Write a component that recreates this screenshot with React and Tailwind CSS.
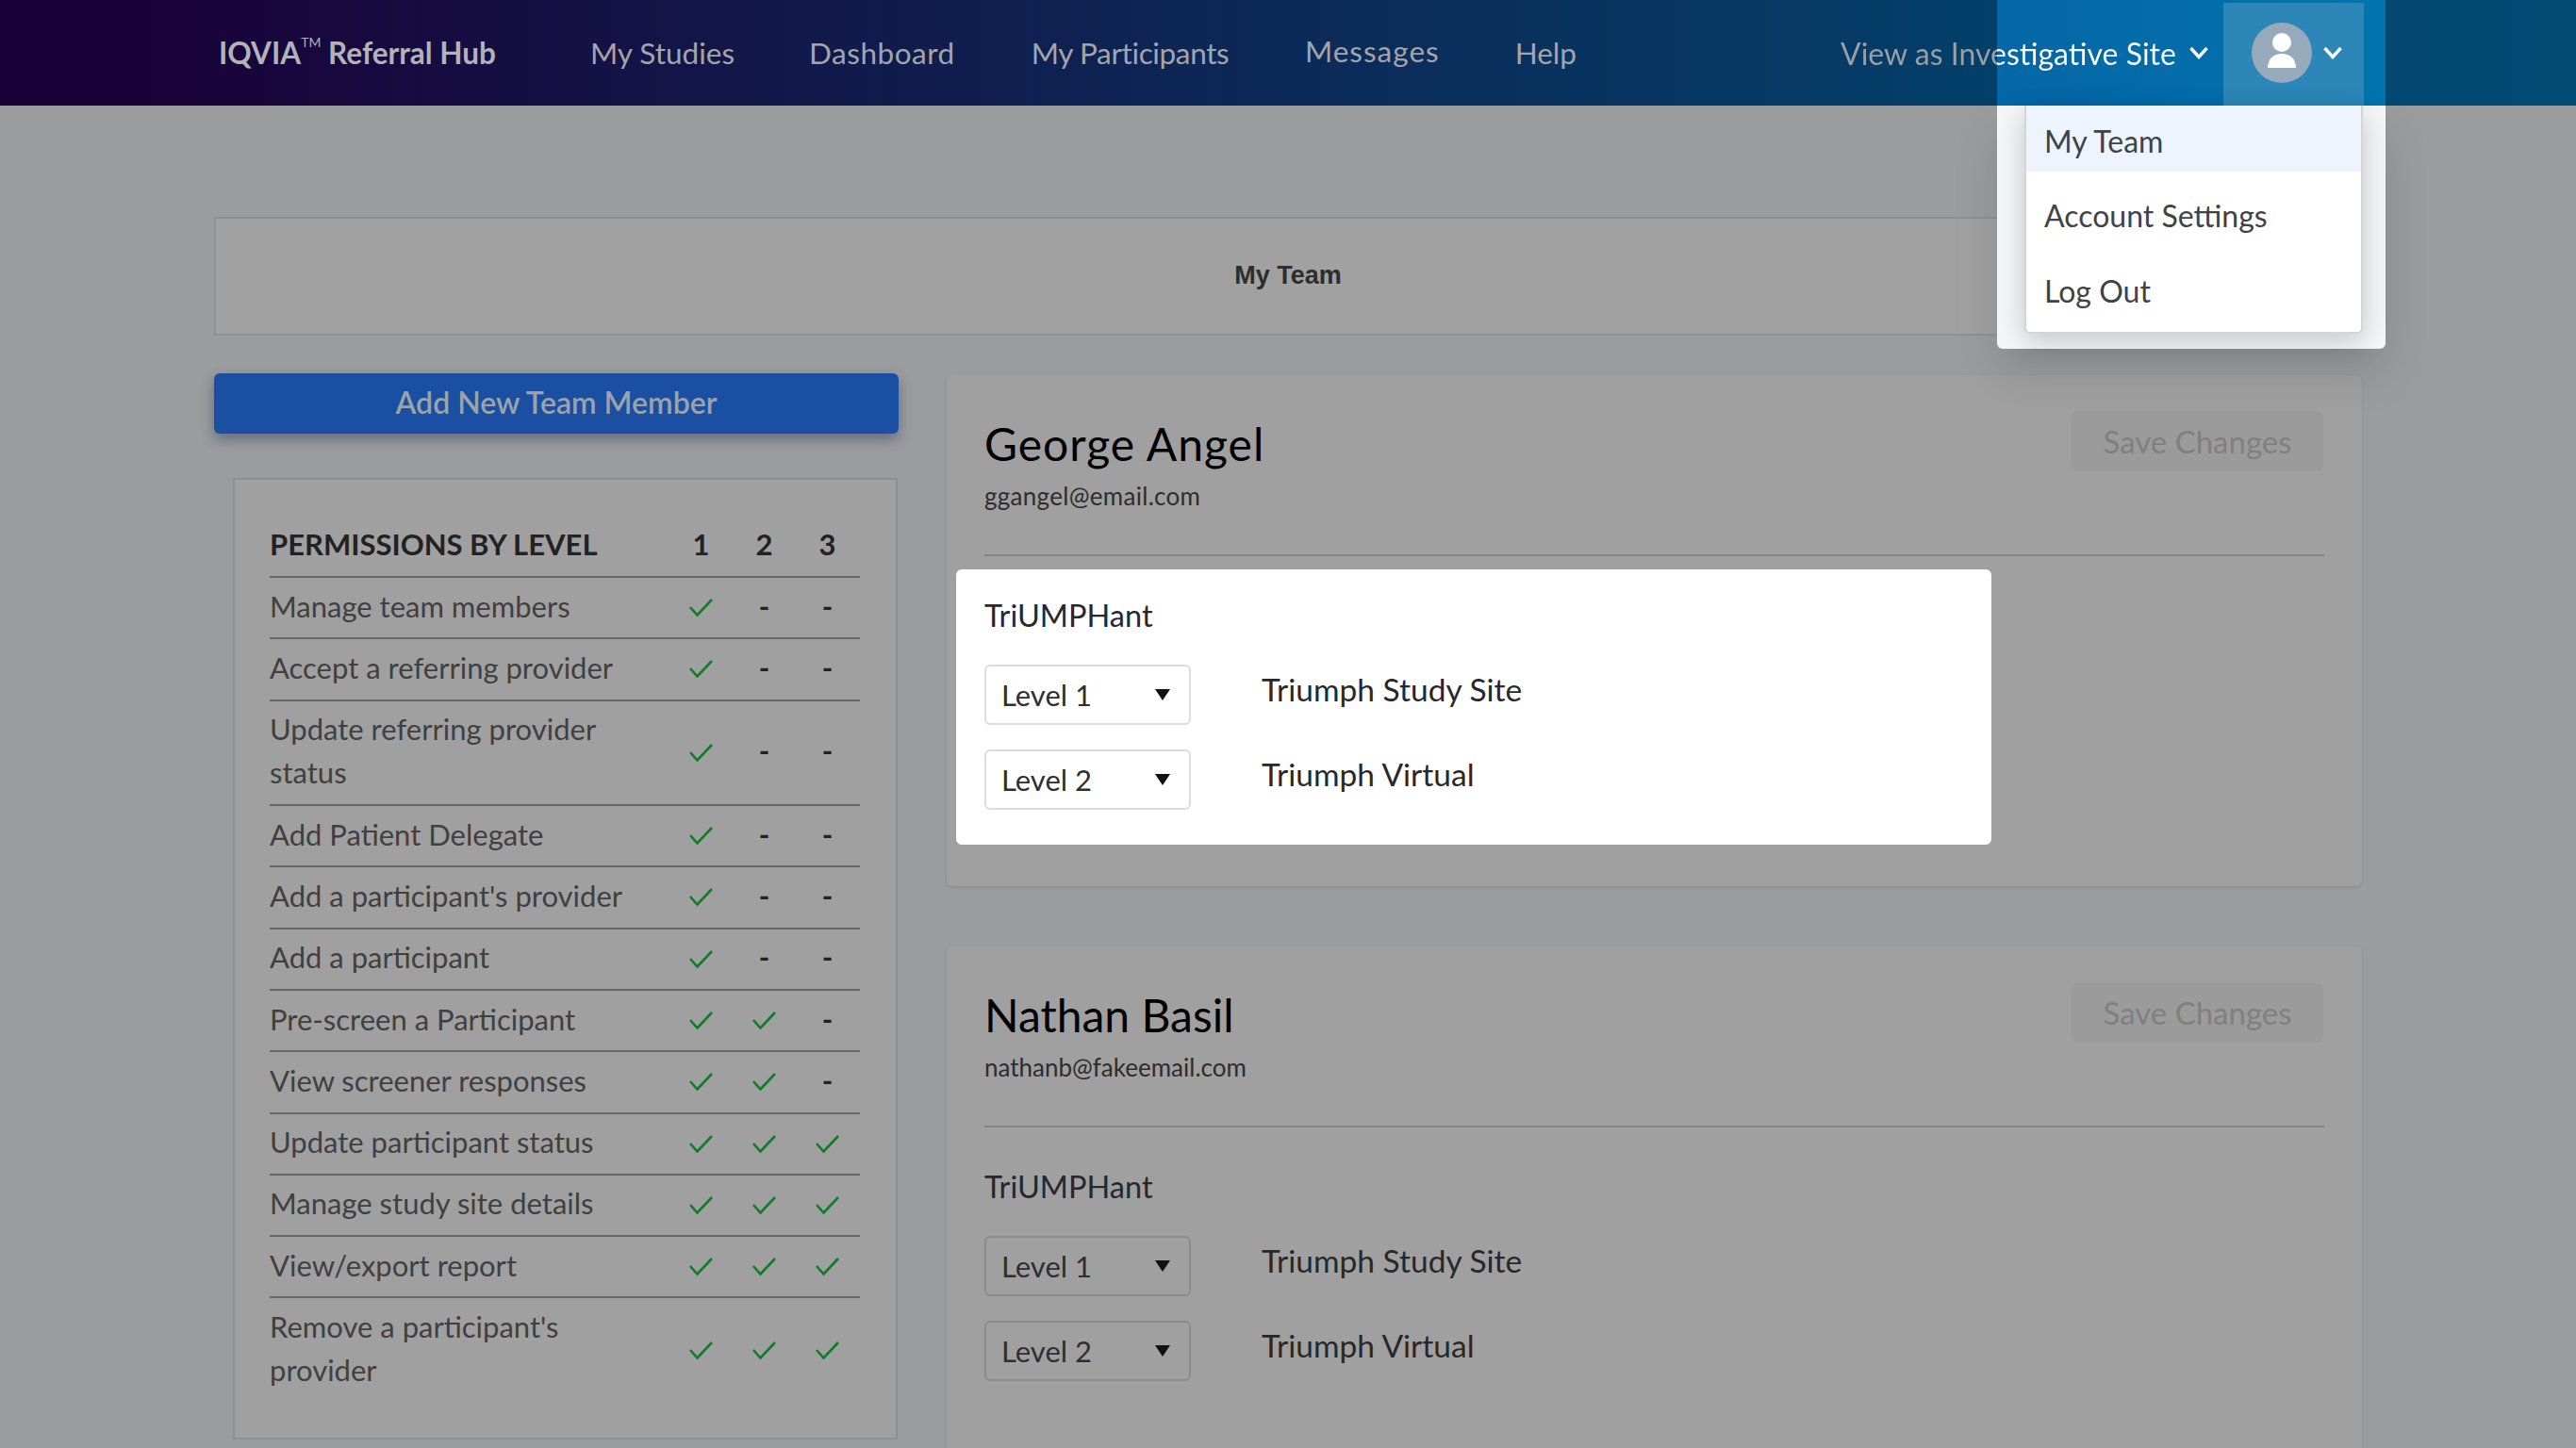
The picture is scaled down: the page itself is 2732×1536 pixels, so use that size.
import React from "react";

const font = "font-['Lato','Liberation_Sans',sans-serif]";

const permissions = [
  { label: ["Manage team members"], levels: [1, 0, 0] },
  { label: ["Accept a referring provider"], levels: [1, 0, 0] },
  { label: ["Update referring provider", "status"], levels: [1, 0, 0] },
  { label: ["Add Patient Delegate"], levels: [1, 0, 0] },
  { label: ["Add a participant's provider"], levels: [1, 0, 0] },
  { label: ["Add a participant"], levels: [1, 0, 0] },
  { label: ["Pre-screen a Participant"], levels: [1, 1, 0] },
  { label: ["View screener responses"], levels: [1, 1, 0] },
  { label: ["Update participant status"], levels: [1, 1, 1] },
  { label: ["Manage study site details"], levels: [1, 1, 1] },
  { label: ["View/export report"], levels: [1, 1, 1] },
  { label: ["Remove a participant's", "provider"], levels: [1, 1, 1] },
];

const Chevron = ({ className }) => (
  <svg viewBox="0 0 20 14" className={className} fill="none" stroke="currentColor" strokeWidth="3.4">
    <path d="M1.5 2 L10 11.5 L18.5 2" />
  </svg>
);

const Tick = () => (
  <svg viewBox="0 0 25 19" className="w-[25px] h-[19px]" fill="none" stroke="#0f7d27" strokeWidth="2.6">
    <path d="M1 9 L8.5 17.5 L24 1" />
  </svg>
);

const LevelSelect = ({ level, light }) => (
  <div className={`w-[219px] h-[64px] shrink-0 flex items-center justify-between pl-[16px] pr-[20px] border-2 rounded-md text-[31px] text-[#2c2f33] ${light ? "border-[#dcdcdc]" : "border-[#8b8b8b]"}`}>
    <span>{level}</span>
    <svg viewBox="0 0 16 12" className="w-[16px] h-[12px]"><path d="M0 0 H16 L8 12 Z" fill="#111" /></svg>
  </div>
);

const SiteRow = ({ level, site, light }) => (
  <div className="flex items-start">
    <LevelSelect level={level} light={light} />
    <span className="ml-[75px] pt-[1px] text-[33.5px] leading-[50px] text-[#26282b]">{site}</span>
  </div>
);

const MemberCard = ({ name, email, spotlight, nameClass, emailClass }) => (
  <div className="w-[1501px] h-[542px] mb-[64px] px-[40px] pt-[39px] bg-[#a0a0a0] rounded-md shadow-[0_1px_3px_rgba(0,0,0,0.12)]">
    <div className="flex justify-between items-start h-[153px] pr-[1px] border-b-2 border-[#858585]">
      <div>
        <h2 className={`text-[48px] leading-[68px] text-black ${nameClass || ""}`}>{name}</h2>
        <p className={`text-[26px] leading-[38px] mt-[2px] text-[#2d2d2d] ${emailClass || ""}`}>{email}</p>
      </div>
      <button className="w-[267px] h-[63px] rounded-md bg-[#9b9b9b] text-[33px] text-[#808080]">Save Changes</button>
    </div>
    <div className={spotlight ? "-mx-[30px] mt-[14px] w-[1098px] h-[292px] px-[30px] pt-[24px] bg-white rounded-md" : "mt-[14px] pt-[24px]"}>
      <h3 className="text-[32.5px] leading-[50px] text-[#26282b]">TriUMPHant</h3>
      <div className="mt-[27px] flex flex-col gap-[26px]">
        <SiteRow level="Level 1" site="Triumph Study Site" light={spotlight} />
        <SiteRow level="Level 2" site="Triumph Virtual" light={spotlight} />
      </div>
    </div>
  </div>
);

export default function App() {
  return (
    <div className={`${font} h-[1536px] overflow-hidden bg-[#9b9c9e]`}>
      <header className="h-[112px] flex items-center pl-[232px] pr-[202px] bg-[linear-gradient(90deg,#1a0038_4%,#0b2b59_52%,#03406a_78%,#024c74_100%)] text-[#a3a5ab]">
        <div className="pt-[2px] text-[31.5px] font-bold text-[#b1b3b8]">
          IQVIA<sup className="text-[14px] font-normal align-super">TM</sup> Referral Hub
        </div>
        <nav className="flex pt-[2px] text-[31.5px]">
          <a className="ml-[100px]">My Studies</a>
          <a className="ml-[79px] tracking-[0.5px]">Dashboard</a>
          <a className="ml-[81px] tracking-[-0.35px]">My Participants</a>
          <a className="ml-[80.5px] -mt-[2px] tracking-[1px]">Messages</a>
          <a className="ml-[80px]">Help</a>
        </nav>
        <div className="relative ml-auto w-[412px] h-full flex items-center bg-[linear-gradient(90deg,#0566a5,#0174ae)] text-white">
          <span className="-ml-[166px] pt-[2px] w-[355px] shrink-0 text-[32px] whitespace-nowrap bg-clip-text text-transparent bg-[linear-gradient(90deg,#9aa0a8_166px,#ffffff_166px)]">
            View as Investigative Site
          </span>
          <Chevron className="ml-[15px] w-[20px] h-[14px] shrink-0" />
          <div className="ml-[16px] mt-[3px] w-[149px] h-[109px] shrink-0 flex items-center bg-[#2c86b8] pl-[30px] pb-[3px]">
            <div className="w-[64px] h-[64px] rounded-full bg-[#97aabc] flex items-center justify-center">
              <svg viewBox="0 0 64 64" className="w-[64px] h-[64px]" fill="#fff">
                <circle cx="32" cy="21" r="10" />
                <path d="M17 48 C17 38 24 33 32 33 C40 33 47 38 47 48 Z" />
              </svg>
            </div>
            <Chevron className="ml-[12px] w-[20px] h-[14px]" />
          </div>
          {/* spotlighted account menu */}
          <div className="absolute top-[112px] left-0 w-[412px] h-[258px] bg-[#f5f6f8] rounded-b-md shadow-[0_26px_50px_rgba(0,0,0,0.12)] z-10">
            <div className="ml-[29px] w-[359px] h-[242px] bg-white rounded-b-md border-x-2 border-b-2 border-[#d3d5d8] shadow-[0_8px_30px_rgba(0,0,0,0.2)] text-[32px] text-[#3f4347]">
              <div className="h-[70px] pl-[19px] pt-[15px] leading-[46px] bg-[#edf4fd] mb-[8px]">My Team</div>
              <div className="h-[80px] pl-[19px] leading-[78px]">Account Settings</div>
              <div className="h-[80px] pl-[19px] leading-[78px]">Log Out</div>
            </div>
          </div>
        </div>
      </header>

      <main className="pl-[227px] pt-[118px]">
        <div className="w-[2278px] h-[126px] pb-[2px] flex items-center justify-center bg-[#a1a1a1] border-2 border-[#8f9092] font-['Liberation_Sans',sans-serif] font-bold text-[27px] text-[#2d2d2d]">
          My Team
        </div>

        <div className="flex mt-[40px]">
          <div className="w-[726px]">
            <button className="w-full h-[64px] pb-[2px] rounded-md bg-[#1b4fa2] text-[32px] font-semibold text-[#9aa3ad] shadow-[0_6px_14px_rgba(30,50,100,0.45)]">
              Add New Team Member
            </button>
            <div className="ml-[20px] mt-[47px] w-[705px] h-[1020px] border-2 border-[#8e8f90] bg-[#a0a0a0] pl-[37px] pr-[38px] pt-[34px]">
              <div className="flex items-center h-[70px] pr-[1px] border-b-2 border-[#676767] text-[#222] font-bold text-[31px]">
                <span className="flex-1">PERMISSIONS BY LEVEL</span>
                {[1, 2, 3].map((n) => (
                  <span key={n} className="w-[67px] text-center">{n}</span>
                ))}
              </div>
              {permissions.map((row, i) => (
                <div
                  key={i}
                  className={`flex items-center py-[8.66px] pr-[1px] text-[31px] leading-[46px] text-[#404040] ${i < permissions.length - 1 ? "border-b-2 border-[#676767]" : ""}`}
                >
                  <div className="flex-1 -translate-y-[2px]">
                    {row.label.map((l) => (
                      <div key={l}>{l}</div>
                    ))}
                  </div>
                  {row.levels.map((on, j) => (
                    <div key={j} className="w-[67px] flex justify-center">
                      {on ? <Tick /> : <span className="font-bold text-[#222] -translate-y-[2px]">-</span>}
                    </div>
                  ))}
                </div>
              ))}
            </div>
          </div>

          <div className="ml-[51px] mt-[2px]">
            <MemberCard name="George Angel" email="ggangel@email.com" spotlight nameClass="tracking-[1px]" emailClass="tracking-[0.3px]" />
            <MemberCard name="Nathan Basil" email="nathanb@fakeemail.com" />
          </div>
        </div>
      </main>
    </div>
  );
}
